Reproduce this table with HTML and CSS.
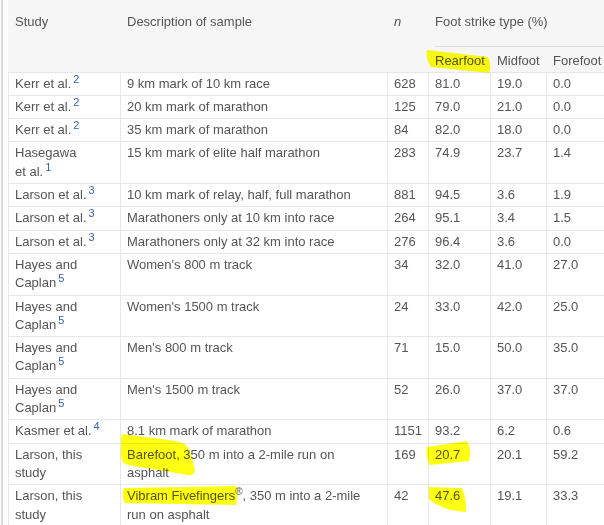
FILE: index.html
```html
<!DOCTYPE html>
<html lang="en">
<head>
<meta charset="utf-8">
<title>Foot strike type</title>
<link rel="stylesheet" href="styles.css">
</head>
<body>
<div class="page">
  <div class="frame">
    <table class="strike">
      <colgroup>
        <col class="c-study"><col class="c-desc"><col class="c-n"><col class="c-rf"><col class="c-mf"><col class="c-ff">
      </colgroup>
      <thead>
        <tr class="head-top">
          <th rowspan="2">Study</th>
          <th rowspan="2">Description of sample</th>
          <th rowspan="2" class="n">n</th>
          <th colspan="3" class="group"><div class="group-label">Foot strike type (%)</div></th>
        </tr>
        <tr class="head-sub">
          <th>Rearfoot</th>
          <th>Midfoot</th>
          <th>Forefoot</th>
        </tr>
      </thead>
      <tbody>
        <tr><td>Kerr et&nbsp;al.<sup class="ref">2</sup></td><td>9 km mark of 10 km race</td><td>628</td><td>81.0</td><td>19.0</td><td>0.0</td></tr>
        <tr><td>Kerr et&nbsp;al.<sup class="ref">2</sup></td><td>20 km mark of marathon</td><td>125</td><td>79.0</td><td>21.0</td><td>0.0</td></tr>
        <tr><td>Kerr et&nbsp;al.<sup class="ref">2</sup></td><td>35 km mark of marathon</td><td>84</td><td>82.0</td><td>18.0</td><td>0.0</td></tr>
        <tr><td>Hasegawa et&nbsp;al.<sup class="ref">1</sup></td><td>15 km mark of elite half marathon</td><td>283</td><td>74.9</td><td>23.7</td><td>1.4</td></tr>
        <tr><td>Larson et&nbsp;al.<sup class="ref">3</sup></td><td>10 km mark of relay, half, full marathon</td><td>881</td><td>94.5</td><td>3.6</td><td>1.9</td></tr>
        <tr><td>Larson et&nbsp;al.<sup class="ref">3</sup></td><td>Marathoners only at 10 km into race</td><td>264</td><td>95.1</td><td>3.4</td><td>1.5</td></tr>
        <tr><td>Larson et&nbsp;al.<sup class="ref">3</sup></td><td>Marathoners only at 32 km into race</td><td>276</td><td>96.4</td><td>3.6</td><td>0.0</td></tr>
        <tr><td>Hayes and Caplan<sup class="ref">5</sup></td><td>Women's 800 m track</td><td>34</td><td>32.0</td><td>41.0</td><td>27.0</td></tr>
        <tr><td>Hayes and Caplan<sup class="ref">5</sup></td><td>Women's 1500 m track</td><td>24</td><td>33.0</td><td>42.0</td><td>25.0</td></tr>
        <tr><td>Hayes and Caplan<sup class="ref">5</sup></td><td>Men's 800 m track</td><td>71</td><td>15.0</td><td>50.0</td><td>35.0</td></tr>
        <tr><td>Hayes and Caplan<sup class="ref">5</sup></td><td>Men's 1500 m track</td><td>52</td><td>26.0</td><td>37.0</td><td>37.0</td></tr>
        <tr><td>Kasmer et&nbsp;al.<sup class="ref">4</sup></td><td>8.1 km mark of marathon</td><td>1151</td><td>93.2</td><td>6.2</td><td>0.6</td></tr>
        <tr><td>Larson, this study</td><td>Barefoot, 350 m into a 2-mile run on asphalt</td><td>169</td><td>20.7</td><td>20.1</td><td>59.2</td></tr>
        <tr><td>Larson, this study</td><td>Vibram Fivefingers<sup class="reg">®</sup>, 350 m into a 2-mile run on asphalt</td><td>42</td><td>47.6</td><td>19.1</td><td>33.3</td></tr>
      </tbody>
    </table>
    <svg class="marks" width="604" height="525" viewBox="0 0 604 525" aria-hidden="true">
      <path d="M427,50 L488,57 Q492,65 489,73 L431,67 Q425,58 427,50 Z"/>
      <path d="M123,434 L176,441 Q187,443 190,451 L195,470 Q194,476 188,475 L128,465 Q121,463 121,455 L121,440 Q121,434 123,434 Z"/>
      <path d="M124,488 L236,486 Q239,495 236,505 L125,503 Q121,496 124,488 Z"/>
      <path d="M427,447 L467,441 Q472,450 469,461 L430,465 Q425,456 427,447 Z"/>
      <path d="M429,487 L462,488 Q467,500 466,512 L450,510 Q432,503 429,499 Z"/>
    </svg>
  </div>
</div>
</body>
</html>
```
FILE: styles.css
```css
html, body {
  margin: 0;
  padding: 0;
  background: #ffffff;
  overflow: hidden;
}

.page {
  height: 525px;
  overflow: hidden;
  margin-left: 1px;
  border-left: 2px solid #dadada;
  padding-left: 5px;
}

.frame {
  position: relative;
}

.strike {
  table-layout: fixed;
  width: 612px;
  border-collapse: separate;
  border-spacing: 0;
  font-family: "Liberation Sans", Arial, sans-serif;
  font-size: 13px;
  line-height: 18.3px;
  color: #555555;
  border-bottom: 1px solid #e4e8ec;
}

.c-study { width: 112px; }
.c-desc { width: 267px; }
.c-n { width: 41px; }
.c-rf { width: 62px; }
.c-mf { width: 56px; }
.c-ff { width: 74px; }

.strike th {
  font-weight: normal;
  text-align: left;
  vertical-align: top;
  background: #f6f6f6;
  border-left: 1px solid transparent;
  padding: 13px 8px 0 6px;
}

.strike th.n {
  font-style: italic;
}

.strike th.group {
  padding: 13px 0 0 6px;
}

.group-label {
  padding-bottom: 15px;
  border-bottom: 1px solid #dedede;
}

.head-sub th {
  padding: 5px 8px 1px 6px;
}

.strike td {
  vertical-align: top;
  padding: 2px 8px 2px 6px;
  border-left: 1px solid #e4e8ec;
  border-top: 1px solid #e4e8ec;
}

.ref {
  font-size: 11px;
  line-height: 0;
  vertical-align: 5px;
  color: #3a62a8;
  margin-left: 2px;
}

.reg {
  font-size: 10px;
  line-height: 0;
  vertical-align: 5px;
}

.marks {
  position: absolute;
  left: -8px;
  top: 0;
  pointer-events: none;
  mix-blend-mode: multiply;
  fill: #ffff14;
}
```
